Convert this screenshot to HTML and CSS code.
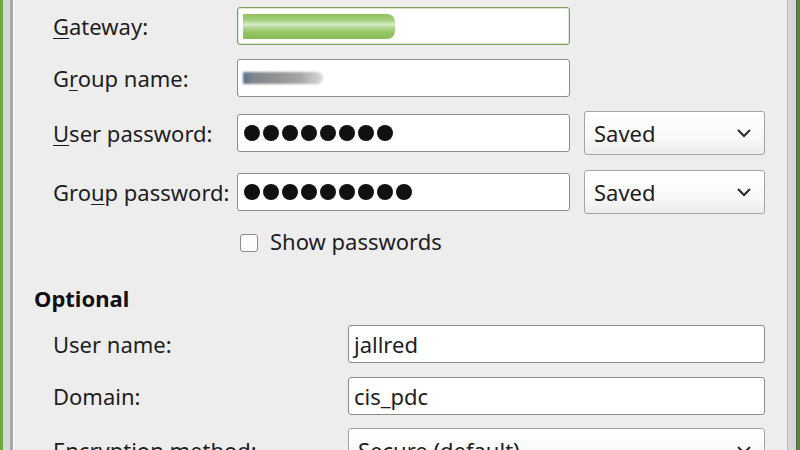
FILE: index.html
```html
<!DOCTYPE html>
<html>
<head>
<meta charset="utf-8">
<link rel="stylesheet" href="styles.css">
</head>
<body>
<div class="window">
  <div class="frame-left"><span class="fl-green"></span><span class="fl-band"></span><span class="fl-dark"></span><span class="fl-light"></span></div>
  <main class="content">
    <section class="main-form">
      <div class="row r-gateway">
        <label class="lbl"><u>G</u>ateway:</label>
        <div class="entry entry-focus"><span class="smudge-green"></span></div>
      </div>
      <div class="row r-group">
        <label class="lbl">G<u>r</u>oup name:</label>
        <div class="entry"><span class="smudge-grey"></span></div>
      </div>
      <div class="row r-pass">
        <label class="lbl"><u>U</u>ser password:</label>
        <div class="entry dots"><i></i><i></i><i></i><i></i><i></i><i></i><i></i><i></i></div>
        <div class="combo"><span>Saved</span><svg width="16" height="10" viewBox="0 0 16 10"><polyline points="2,2 8,8 14,2" fill="none" stroke="#2a2a2a" stroke-width="2"/></svg></div>
      </div>
      <div class="row r-pass2">
        <label class="lbl">Gro<u>u</u>p password:</label>
        <div class="entry dots"><i></i><i></i><i></i><i></i><i></i><i></i><i></i><i></i><i></i></div>
        <div class="combo"><span>Saved</span><svg width="16" height="10" viewBox="0 0 16 10"><polyline points="2,2 8,8 14,2" fill="none" stroke="#2a2a2a" stroke-width="2"/></svg></div>
      </div>
      <div class="check-row">
        <span class="checkbox"></span>
        <span class="check-text">Show passwords</span>
      </div>
    </section>
    <h2 class="heading">Optional</h2>
    <section class="opt-form">
      <div class="orow">
        <label class="lbl">User name:</label>
        <div class="entry"><span class="val">jallred</span></div>
      </div>
      <div class="orow">
        <label class="lbl">Domain:</label>
        <div class="entry"><span class="val">cis_pdc</span></div>
      </div>
      <div class="orow orow-combo">
        <label class="lbl">Encryption method:</label>
        <div class="combo combo-wide"><span>Secure (default)</span><svg width="16" height="10" viewBox="0 0 16 10"><polyline points="2,2 8,8 14,2" fill="none" stroke="#2a2a2a" stroke-width="2"/></svg></div>
      </div>
    </section>
  </main>
  <div class="frame-right"><span class="fr-line"></span><span class="fr-band"></span><span class="fr-dark"></span><span class="fr-green"></span></div>
</div>
</body>
</html>
```
FILE: styles.css
```css
* { box-sizing: border-box; }
html, body {
  margin: 0;
  padding: 0;
  width: 800px;
  height: 450px;
  overflow: hidden;
  background: #ededed;
}
body {
  font-family: "Noto Sans", "Open Sans", sans-serif;
  font-size: 22px;
  color: #1e1e1e;
}
.window {
  display: flex;
  height: 450px;
  overflow: hidden;
}
.frame-left, .frame-right {
  display: flex;
  height: 100%;
  flex: none;
}
.frame-left span, .frame-right span { display: block; height: 100%; }
.fl-green { width: 3px; background: #6aac3c; }
.fl-band { width: 7px; background: #d7d7d7; }
.fl-dark { width: 3px; background: #a9a9a9; }
.fl-light { width: 1px; background: #fbfbfb; }
.fr-line { width: 1px; background: #b3b3b3; }
.fr-band { width: 8px; background: #d7d7d7; }
.fr-dark { width: 1px; background: #5c5c5c; }
.fr-green { width: 3px; background: #4f8c2c; }

.content {
  flex: 1;
  padding: 7px 0 0 0;
  min-width: 0;
}

.main-form {
  display: flex;
  flex-direction: column;
  padding-left: 39px;
}
.row {
  display: flex;
  align-items: center;
}
.r-gateway { height: 38px; }
.r-group { height: 38px; margin-top: 14px; }
.r-pass { height: 44px; margin-top: 14px; }
.r-pass2 { height: 44px; margin-top: 15px; }

.lbl {
  width: 184px;
  flex: none;
  line-height: 30px;
}
.lbl u { text-underline-offset: 3px; text-decoration-thickness: 1px; }

.entry {
  width: 333px;
  height: 38px;
  flex: none;
  background: #ffffff;
  border: 1px solid #8c8c8c;
  border-radius: 3px;
  display: flex;
  align-items: center;
  padding-left: 5px;
  overflow: hidden;
}
.entry-focus {
  border-color: #7c9f5a;
  box-shadow: inset 0 0 0 1px #dbe8cf;
}
.smudge-green {
  display: block;
  width: 152px;
  height: 25px;
  background: linear-gradient(180deg, #8fc15c 0%, #a4cf7e 25%, #d9ecc8 42%, #b3d792 55%, #92c462 75%, #8abd58 100%);
  filter: blur(0.6px);
  border-radius: 1px 8px 8px 1px;
}
.smudge-grey {
  display: block;
  width: 80px;
  height: 12px;
  background: linear-gradient(90deg, #5b6e88 0%, #7d8590 12%, #8f8f8f 35%, #a6a6a6 70%, rgba(190,190,190,0.6) 100%);
  filter: blur(1px);
  border-radius: 1px 6px 6px 1px;
}
.val { line-height: 30px; }

.dots {
  gap: 3px;
  padding-left: 6px;
}
.dots i {
  display: block;
  width: 16px;
  height: 16px;
  border-radius: 50%;
  background: #111;
}

.combo {
  margin-left: 14px;
  width: 181px;
  height: 44px;
  flex: none;
  border: 1px solid #a5a5a5;
  border-radius: 3px;
  background: linear-gradient(180deg, #ffffff 0%, #f9f9f9 60%, #ececec 100%);
  display: flex;
  align-items: center;
  justify-content: space-between;
  padding: 0 12px 0 9px;
  line-height: 30px;
}

.check-row {
  display: flex;
  align-items: center;
  margin-top: 15px;
  padding-left: 187px;
  height: 24px;
}
.checkbox {
  width: 18px;
  height: 18px;
  border: 1px solid #8d8d8d;
  border-radius: 3px;
  background: #fcfcfc;
  margin-top: 3px;
}
.check-text {
  margin-left: 12px;
  line-height: 30px;
}

.heading {
  font-size: 22px;
  font-weight: bold;
  margin: 30px 0 0 20px;
  line-height: 30px;
  color: #111;
}

.opt-form {
  display: flex;
  flex-direction: column;
  padding-left: 39px;
  margin-top: 12px;
  gap: 14px;
}
.orow {
  display: flex;
  align-items: center;
  height: 38px;
}
.orow .lbl { width: 295px; }
.orow .entry { width: 417px; }
.orow-combo {
  height: 44px;
  margin-top: -1px;
}
.combo-wide {
  margin-left: 0;
  width: 417px;
}
```
